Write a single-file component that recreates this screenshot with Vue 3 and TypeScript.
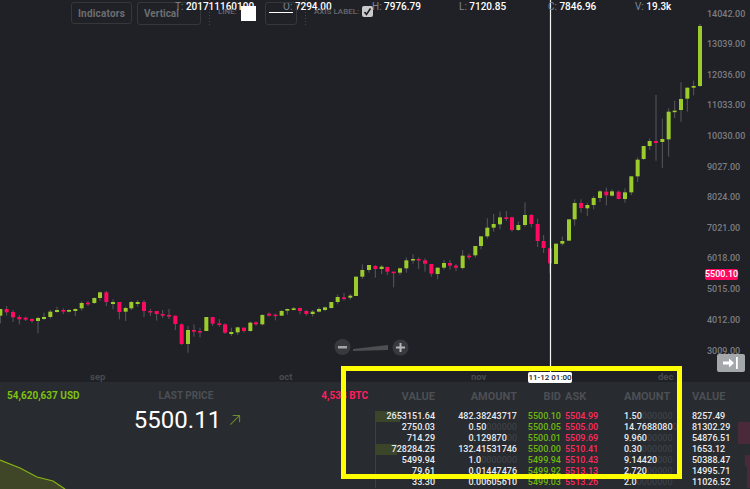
<script setup lang="ts">
type C = [number, number, number, number, number, number];
interface Group { ox: number; oy: number; rows: C[] }
// rows: x, top, bottom, wick top, wick bottom, up(1)/down(0), in 3x sample units
const groups: Group[] = [
  { ox: 0, oy: 270, rows: [
    [1,117,137,117,160,1],[20,117,127,108,137,0],[39,126,142,120,156,0],[58,141,148,135,163,0],[77,143,149,140,153,0],[96,147,153,145,159,0],[114,144,153,140,190,1],[132,141,147,128,150,1],[151,125,141,120,146,1],[171,120,126,110,128,1],[190,120,125,115,132,0],[207,120,125,118,127,1],[226,117,123,115,138,1],[245,99,115,94,122,1],[264,98,103,93,108,0],[283,84,99,82,102,1],[300,67,84,65,92,1],[319,67,96,63,108,0],[339,96,102,88,118,1],[358,96,126,96,148,0],[377,114,125,110,153,1],[394,96,115,93,120,1],[413,96,102,90,110,1],[432,96,123,90,141,0],[451,123,127,117,138,0],[470,123,132,123,152,0],[488,132,137,120,144,0],[507,135,139,117,147,0],[526,137,162,137,180,0],[545,163,222,160,225,0],[564,180,222,168,248,1]
  ]},
  { ox: 170, oy: 280, rows: [
    [72,150,155,133,170,0],[90,153,157,143,172,0],[109,111,153,111,153,1],[128,111,131,111,138,0],[148,130,135,117,140,0],[165,133,158,130,162,0],[184,156,162,143,168,1],[203,142,157,140,165,1],[222,143,153,143,158,0],[241,128,153,125,155,1],[258,127,133,124,137,0],[277,105,133,102,136,1],[297,101,107,97,110,0],[316,104,108,100,121,0],[335,93,107,90,108,1],[352,87,92,86,104,1],[371,85,90,81,91,1],[390,84,93,83,103,0],[409,93,102,90,107,0],[428,95,102,90,110,1],[447,87,95,82,97,1],[465,82,90,80,94,1],[484,66,84,66,86,1],[503,51,66,43,73,1],[522,52,57,39,62,0],[541,47,53,42,59,1]
  ]},
  { ox: 350, oy: 200, rows: [
    [18,230,288,230,288,1],[37,210,230,193,237,1],[57,195,210,195,218,1],[76,198,207,195,233,0],[95,200,207,195,222,1],[112,201,215,200,225,0],[131,215,219,215,262,0],[150,205,218,203,225,1],[169,181,205,172,218,1],[189,177,181,163,191,1],[206,177,180,172,207,0],[225,181,191,175,215,0],[244,192,221,192,230,0],[263,203,222,203,238,1],[282,189,203,180,209,1],[300,189,197,180,209,0],[318,197,203,192,213,0],[338,167,204,150,209,1],[357,167,172,160,178,0],[376,138,166,138,173,1],[393,109,138,109,148,1],[412,83,109,55,116,1],[431,72,83,42,95,1],[450,52,73,35,88,1],[469,52,57,33,63,0],[486,52,90,50,95,0],[505,75,90,65,93,1],[525,45,75,7,80,1],[544,45,72,42,82,0],[563,72,123,56,141,0],[581,123,144,105,159,0],[600,145,190,145,220,0]
  ]},
  { ox: 550, oy: 150, rows: [
    [18,281,342,281,342,1],[37,273,281,260,287,1],[57,208,272,208,272,1],[74,159,208,148,227,1],[93,159,174,148,188,0],[112,165,175,158,198,1],[131,144,165,138,178,1],[150,124,144,120,156,1],[169,125,136,113,166,0],[186,124,137,118,140,1],[206,125,147,122,148,0],[225,127,147,115,158,1],[244,79,127,79,135,1],[263,29,79,22,96,1]
  ]},
  { ox: 550, oy: 20, rows: [
    [281,378,417,378,420,1],[299,363,378,355,390,1],[318,363,369,225,422,0],[337,357,366,296,444,1],[356,275,358,265,410,1],[374,272,276,242,294,1],[393,237,270,187,305,1],[412,203,236,203,275,1],[431,198,203,182,226,1],[450,18,198,12,201,1]
  ]}
];
const candles = groups.flatMap((g) =>
  g.rows.map(([x, t, b, wt, wb, up]) => ({
    cx: g.ox + x / 3,
    y: g.oy + t / 3,
    h: Math.max((b - t) / 3, 1.5),
    wt: g.oy + wt / 3,
    wb: g.oy + wb / 3,
    up: up === 1
  }))
);
const yLabels: [string, number][] = [
  ['14042.00', 14], ['13039.00', 44], ['12036.00', 75], ['11033.00', 105], ['10030.00', 136], ['9027.00', 167],
  ['8024.00', 197], ['7021.00', 228], ['6018.00', 258], ['5015.00', 289], ['4012.00', 320], ['3009.00', 351]
];
const months: [string, number][] = [['sep', 90], ['oct', 279], ['nov', 471], ['dec', 658]];
const stats = [
  { k: 'H:', v: '7976.79', x: 372 }, { k: 'L:', v: '7120.85', x: 459 },
  { k: 'C:', v: '7846.96', x: 548 }, { k: 'V:', v: '19.3k', x: 635 }
];
const rows = [
  { lv: '2653151.64', la: '482.38243717', ld: '', bid: '5500.10', ask: '5504.99', ra: '1.50', rd: '000000', rv: '8257.49', lb: 25, rb: 0 },
  { lv: '2750.03', la: '0.50', ld: '000000', bid: '5500.05', ask: '5505.00', ra: '14.7688080', rd: '0', rv: '81302.29', lb: 1, rb: 12 },
  { lv: '714.29', la: '0.129870', ld: '00', bid: '5500.01', ask: '5509.69', ra: '9.960', rd: '00000', rv: '54876.51', lb: 1, rb: 12 },
  { lv: '728284.25', la: '132.41531746', ld: '', bid: '5500.00', ask: '5510.41', ra: '0.30', rd: '000000', rv: '1653.12', lb: 22, rb: 0 },
  { lv: '5499.94', la: '1.0', ld: '0000000', bid: '5499.94', ask: '5510.43', ra: '9.14420', rd: '000', rv: '50388.47', lb: 1, rb: 5 },
  { lv: '79.61', la: '0.01447476', ld: '', bid: '5499.92', ask: '5513.13', ra: '2.720', rd: '00000', rv: '14995.71', lb: 1, rb: 3 },
  { lv: '33.30', la: '0.00605610', ld: '', bid: '5499.03', ask: '5513.26', ra: '2.0', rd: '0000000', rv: '11026.52', lb: 1, rb: 3 }
];
</script>

<template>
  <div class="app">
    <section class="chart">
      <svg class="plot" width="750" height="382" viewBox="0 0 750 382">
        <g v-for="(c, i) in candles" :key="i">
          <line :x1="c.cx" :x2="c.cx" :y1="c.wt" :y2="c.wb" stroke="#56585c" stroke-width="1" />
          <rect :x="c.cx - 2" :y="c.y" width="4" :height="c.h" :fill="c.up ? '#9ccb2c' : '#ff0a60'" />
        </g>
        <line x1="550.5" x2="550.5" y1="0" y2="372" stroke="#f4f4f4" stroke-width="1.2" />
        <line x1="209.5" x2="209.5" y1="0" y2="25" stroke="#44464a" stroke-dasharray="1 2" />
        <line x1="305.5" x2="305.5" y1="0" y2="25" stroke="#44464a" stroke-dasharray="1 2" />
        <circle cx="342.5" cy="347" r="8" fill="#37393e" />
        <rect x="338" y="346" width="9" height="2.5" fill="#a4a5a7" />
        <polygon points="353,349 388,345 388,350 353,351" fill="#4c4e52" />
        <circle cx="400.5" cy="347.5" r="8" fill="#37393e" />
        <path d="M396 347.5H405M400.5 343V352" stroke="#b4b5b7" stroke-width="2" fill="none" />
      </svg>

      <div class="btn btn-ind">Indicators</div>
      <div class="btn btn-ver">Vertical</div>
      <span class="stat st-t"><em>T:</em> <b>201711160100</b></span>
      <span class="stat st-o"><em>O:</em> <b>7294.00</b></span>
      <span class="label lb-line">LINE:</span>
      <span class="swatch"></span>
      <div class="linebox"><i></i></div>
      <span class="label lb-axis">AXIS LABEL:</span>
      <span class="check">
        <svg width="11" height="11" viewBox="0 0 11 11">
          <path d="M2.5 6L4.5 8.5L8.5 2.5" stroke="#1f2025" stroke-width="1.6" fill="none" />
        </svg>
      </span>
      <span
        v-for="s in stats"
        :key="s.k"
        class="stat"
        :style="{ left: s.x + 'px' }"
      ><em>{{ s.k }}</em> <b>{{ s.v }}</b></span>

      <span
        v-for="l in yLabels"
        :key="l[0]"
        class="ylabel"
        :style="{ top: l[1] - 6 + 'px' }"
      >{{ l[0] }}</span>
      <span class="price-tag">5500.10</span>
      <span
        v-for="m in months"
        :key="m[0]"
        class="month"
        :style="{ left: m[1] + 'px' }"
      >{{ m[0] }}</span>
      <span class="time-tag">11-12 01:00</span>
      <div class="go-end">
        <svg width="16" height="12" viewBox="0 0 16 12">
          <path d="M0 4.5H6V1.5L11 6L6 10.5V7.5H0Z" fill="#fff" />
          <rect x="13" y="0" width="1.8" height="12" fill="#fff" />
        </svg>
      </div>
    </section>

    <section class="panel">
      <div class="summary">
        <div class="summary-top">
          <span class="usd">54,620,637 USD</span>
          <span class="last">LAST PRICE</span>
          <span class="btc">4,538 BTC</span>
        </div>
        <div class="big">
          <span>5500.11</span>
          <svg width="12" height="12" viewBox="0 0 13 13">
            <path d="M1.5 11.5L11.5 1.5M4 1.5H11.5V9" stroke="#6d8c2b" stroke-width="1.1" fill="none" />
          </svg>
        </div>
        <svg class="depth" width="70" height="30" viewBox="0 0 70 30">
          <polygon points="0,1 20,9 37,18 53,22 65,30 0,30" fill="#3e4627" />
          <polyline points="0,1 20,9 37,18 53,22 65,30" fill="none" stroke="#8ab512" stroke-width="1.2" />
        </svg>
      </div>

      <div class="book">
        <span class="th r">VALUE</span>
        <span class="th r">AMOUNT</span>
        <span class="th r">BID</span>
        <span class="th ask-h">ASK</span>
        <span class="th">AMOUNT</span>
        <span class="th">VALUE</span>
        <template v-for="(row, i) in rows" :key="i">
          <span class="td r vcell">
            <i class="bar" :style="{ width: row.lb + 'px' }"></i>
            <span class="over">{{ row.lv }}</span>
          </span>
          <span class="td r">{{ row.la }}<span class="dim">{{ row.ld }}</span></span>
          <span class="td r bid">{{ row.bid }}</span>
          <span class="td ask">{{ row.ask }}</span>
          <span class="td">{{ row.ra }}<span class="dim">{{ row.rd }}</span></span>
          <span class="td rcell">
            <i v-if="row.rb" class="rbar" :style="{ width: row.rb + 'px' }"></i>
            <span class="over">{{ row.rv }}</span>
          </span>
        </template>
      </div>
    </section>

    <div class="highlight"></div>
  </div>
</template>

<style>
html, body { margin: 0; background: #202126; }
</style>

<style scoped>
.app {
  position: relative;
  width: 750px;
  height: 489px;
  overflow: hidden;
  display: flex;
  flex-direction: column;
  background: #202126;
  font-family: Roboto, "Liberation Sans", sans-serif;
}
.chart { position: relative; height: 382px; flex: none; }
.plot { position: absolute; left: 0; top: 0; display: block; }

.btn {
  position: absolute;
  top: 2px;
  box-sizing: border-box;
  border: 1px solid #35373b;
  border-radius: 3px;
  color: #6c6e71;
  font-size: 10px;
  font-weight: 700;
  letter-spacing: 0.2px;
  display: flex;
  align-items: center;
  justify-content: center;
}
.btn-ind { left: 71px; width: 61px; height: 22px; }
.btn-ver { left: 137px; width: 64px; height: 23px; justify-content: flex-start; padding-left: 6px; letter-spacing: 0; }
.label {
  position: absolute;
  top: 7px;
  font-size: 8px;
  line-height: 10px;
  color: #66686c;
  font-weight: 500;
}
.lb-line { left: 218px; }
.lb-axis { left: 314px; }
.swatch {
  position: absolute;
  left: 241px;
  top: 6px;
  width: 15px;
  height: 15px;
  background: #fff;
}
.linebox {
  position: absolute;
  left: 265px;
  top: 2px;
  width: 32px;
  height: 23px;
  box-sizing: border-box;
  border: 1px solid #35373b;
  border-radius: 3px;
}
.linebox i {
  position: absolute;
  left: 3px;
  right: 3px;
  top: 9px;
  height: 1px;
  background: #fff;
}
.check {
  position: absolute;
  left: 362px;
  top: 6px;
  width: 11px;
  height: 11px;
  background: #c9cacb;
  border-radius: 2px;
  display: block;
}
.check svg { display: block; }
.stat {
  position: absolute;
  top: 1px;
  font-size: 10px;
  line-height: 12px;
  white-space: pre;
}
.stat em { font-style: normal; color: #7b8791; }
.stat b { color: #fff; font-weight: 500; }
.st-t { left: 175px; }
.st-o { left: 283px; }
.ylabel {
  position: absolute;
  left: 707px;
  font-size: 9px;
  line-height: 12px;
  color: #7b7c80;
  font-weight: 500;
}
.price-tag {
  position: absolute;
  left: 705px;
  top: 269px;
  width: 33px;
  height: 11px;
  background: #ff0a60;
  color: #fff;
  border-radius: 2px;
  font-size: 9px;
  line-height: 11px;
  text-align: center;
  font-weight: 500;
}
.month {
  position: absolute;
  top: 371px;
  font-size: 9.5px;
  line-height: 12px;
  color: #484a4e;
  font-weight: 700;
}
.time-tag {
  position: absolute;
  left: 528px;
  top: 372px;
  width: 44px;
  height: 11px;
  background: #fff;
  color: #222;
  border-radius: 2px;
  font-size: 8px;
  line-height: 11px;
  text-align: center;
  font-weight: 500;
}
.go-end {
  position: absolute;
  left: 717px;
  top: 354px;
  width: 28px;
  height: 18px;
  background: #a5a8aa;
  border-radius: 2px;
  display: flex;
  align-items: center;
  justify-content: center;
}

.panel {
  flex: 1;
  display: flex;
  background: #282b30;
}
.summary {
  position: relative;
  width: 368px;
  flex: none;
  box-sizing: border-box;
  padding: 8px 0 0 7px;
}
.summary-top {
  display: flex;
  justify-content: space-between;
  font-size: 10px;
  line-height: 12px;
  font-weight: 700;
  align-items: center;
}
.usd { color: #7fc110; }
.last { color: #4c4f54; margin-right: 29px; }
.btc { color: #ff1f5e; }
.big {
  display: flex;
  align-items: center;
  justify-content: center;
  gap: 8px;
  margin-top: 4px;
  width: 361px;
  color: #fff;
  font-size: 24px;
  line-height: 28px;
}
.depth { position: absolute; left: 0; top: 77px; display: block; }

.book {
  display: grid;
  grid-template-columns: 67px 82px 44px 63px 68px 58px;
  grid-template-rows: 25px repeat(7, 11px);
  font-size: 9px;
  line-height: 11px;
  font-weight: 500;
  color: #e9ebee;
  padding-top: 4px;
  flex: none;
}
.th { font-size: 11px; line-height: 22px; font-weight: 700; color: #4c4f54; }
.ask-h { padding-left: 4px; }
.r { text-align: right; }
.bid { color: #6fb70e; }
.ask { color: #ff2a5e; padding-left: 4px; }
.dim { color: #3d4045; }
.vcell, .rcell { position: relative; }
.over { position: relative; }
.bar {
  position: absolute;
  left: 7px;
  top: 0;
  height: 11px;
  background: #3b4529;
}
.rbar {
  position: absolute;
  right: 0;
  top: 0;
  height: 11px;
  background: #4a2a3a;
}

.highlight {
  position: absolute;
  left: 341px;
  top: 366px;
  width: 341px;
  height: 113px;
  box-sizing: border-box;
  border: 5px solid #ffff00;
  pointer-events: none;
}
</style>
